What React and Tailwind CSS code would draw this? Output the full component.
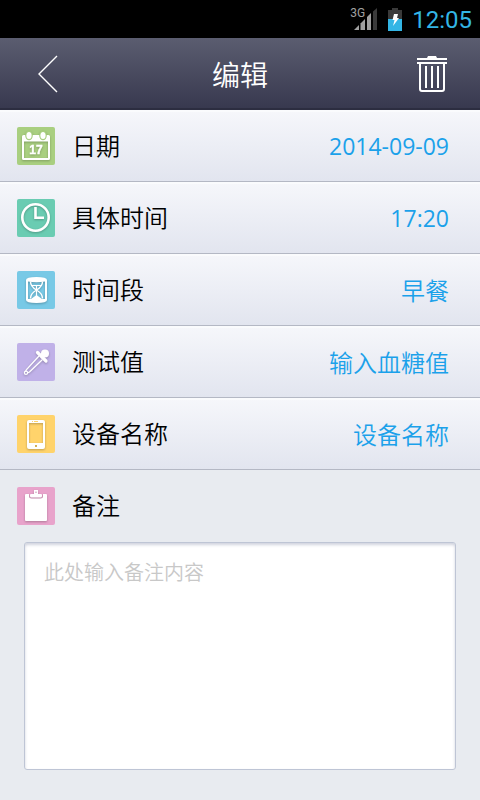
import React, { useState } from 'react';

const SignalIcon = () => (
  <svg width="23" height="22" viewBox="0 0 23 22" aria-hidden="true">
    <path d="M0 22 5 17V22Z" fill="#a0a0a0" />
    <path d="M6.500 22V15.500L11 11V22Z" fill="#a0a0a0" />
    <path d="M13 22V9L17 5V22Z" fill="#a0a0a0" />
    <path d="M19 22V3.500L23 0V22Z" fill="#3a3a3a" />
  </svg>
);

const BatteryIcon = () => (
  <svg width="14" height="23" viewBox="0 0 14 23" aria-hidden="true">
    <path d="M4 0H10V2H14V11H0V2H4Z" fill="#3a3a3a" />
    <path d="M0 11H14V23H0Z" fill="#33b5e5" />
    <path d="M6 6H10L9 10H11L5 18L6.500 12H4.500Z" fill="#fff" />
  </svg>
);

const BackIcon = () => (
  <svg width="20" height="38" viewBox="0 0 20 38" fill="none" stroke="#fff" strokeWidth="1.400" aria-hidden="true">
    <path d="M19 1 1 19 19 37" />
  </svg>
);

const TrashIcon = () => (
  <svg width="30" height="36" viewBox="0 0 30 36" fill="none" stroke="#fff" strokeWidth="2" aria-hidden="true">
    <path d="M11 0H19L20 2H10Z" fill="#fff" stroke="none" />
    <path d="M0 3H30M0 7H30" />
    <path d="M3 7V33Q3 35 5 35H25Q27 35 27 33V7" />
    <path d="M9 10V32M15 10V32M21 10V32" />
  </svg>
);

const CalendarIcon = () => (
  <>
    <path d="M6.500 8H31.500Q33 8 33 9.500V31.500Q33 33 31.500 33H6.500Q5 33 5 31.500V9.500Q5 8 6.500 8ZM7 14.500V31H31V14.500Z" fill="#fff" fillRule="evenodd" />
    <g stroke="none">
      <ellipse cx="12" cy="8.500" rx="3.800" ry="4.800" fill="#a9cf80" />
      <ellipse cx="26" cy="8.500" rx="3.800" ry="4.800" fill="#a9cf80" />
      <ellipse cx="12" cy="8.500" rx="2.600" ry="3.500" fill="#fff" />
      <ellipse cx="26" cy="8.500" rx="2.600" ry="3.500" fill="#fff" />
    </g>
    <text x="19" y="27" textAnchor="middle" fill="#fff" stroke="#fff" strokeWidth="0.400" fontFamily="Liberation Sans, Arial, sans-serif" fontSize="12" fontWeight="700">
      17
    </text>
  </>
);

const ClockIcon = () => (
  <g fill="none" stroke="#fff">
    <circle cx="18.500" cy="18.500" r="13.200" strokeWidth="2.600" />
    <path d="M18.500 8V18.700H27" strokeWidth="2.600" />
  </g>
);

const HourglassIcon = () => (
  <>
    <path
      d="M9 9Q9 6 19.500 6Q30 6 30 9V29Q30 32 19.500 32Q9 32 9 29ZM11 10.500V28H28V10.500Q19.500 12 11 10.500Z"
      fill="#fff"
      fillRule="evenodd"
    />
    <g fill="none" stroke="#fff">
      <path d="M13.500 10.500Q13.500 15.500 19.500 19Q25.500 22.500 25.500 27.500M25.500 10.500Q25.500 15.500 19.500 19Q13.500 22.500 13.500 27.500" strokeWidth="1.400" />
      <path d="M15 14.500H24M19.500 15V27" strokeWidth="1.200" />
    </g>
    <path d="M14 28 19.500 24 25 28Z" fill="#fff" />
  </>
);

const DropperIcon = () => (
  <g fill="none" stroke="#fff" strokeLinecap="round">
    <path d="M21.500 13.500 9.500 26.500 8.500 28.500M25 17 12.500 29 10.500 30" strokeWidth="1.300" />
    <circle cx="9" cy="29.800" r="1.600" strokeWidth="1.200" />
    <path d="M20.500 9.500 29 18" strokeWidth="3.200" />
    <path d="M24 14 27.500 10.500" strokeWidth="5" strokeLinecap="butt" />
    <circle cx="28" cy="10.500" r="4" fill="#fff" stroke="none" />
  </g>
);

const PhoneIcon = () => (
  <>
    <path d="M12 5H26Q28 5 28 7V32Q28 34 26 34H12Q10 34 10 32V7Q10 5 12 5ZM12 8V28H26V8ZM18 30V32H20V30Z" fill="#fff" fillRule="evenodd" />
    <path d="M15 6.500H16M17 6.500H21" stroke="#ffd36b" strokeWidth="1" />
  </>
);

const ClipboardIcon = () => (
  <>
    <path d="M9 7H12V9Q12 11.500 14.500 11.500H23.500Q26 11.500 26 9V7H29Q30 7 30 8V33Q30 34 29 34H9Q8 34 8 33V8Q8 7 9 7Z" fill="#fff" />
    <path d="M17 3H21V7H24Q25 7 25 8V9Q25 10.500 23.500 10.500H14.500Q13 10.500 13 9V8Q13 7 14 7H17ZM18.500 4.500V6H19.500V4.500Z" fill="#fff" fillRule="evenodd" />
  </>
);

const Tile = ({ className, children }) => (
  <svg
    width="38"
    height="38"
    viewBox="0 0 38 38"
    aria-hidden="true"
    className={`shrink-0 rounded-[2px] [&>g]:drop-shadow-[0_1px_1px_rgba(0,0,0,0.25)] ${className}`}
  >
    <g>{children}</g>
  </svg>
);

const FIELDS = [
  { id: 'date', label: '日期', value: '2014-09-09', font: 'text-[23px] font-normal', tile: 'bg-[#a9cf80]', Icon: CalendarIcon },
  { id: 'time', label: '具体时间', value: '17:20', font: 'text-[23px] font-normal', tile: 'bg-[#6accb2]', Icon: ClockIcon },
  { id: 'period', label: '时间段', value: '早餐', font: 'text-2xl', tile: 'bg-[#78c9e6]', Icon: HourglassIcon },
  { id: 'glucose', label: '测试值', placeholder: '输入血糖值', tile: 'bg-[#c0b1e8]', Icon: DropperIcon },
  { id: 'device', label: '设备名称', placeholder: '设备名称', tile: 'bg-[#ffd36b]', Icon: PhoneIcon },
];

const FieldRow = ({ field }) => {
  const { id, label, value, placeholder, font, tile, Icon } = field;
  const [text, setText] = useState('');

  return (
    <div className="flex h-[72px] items-center gap-[17px] border-b border-[#b4b8c4] bg-linear-to-b from-[#f6f7fb] to-[#e2e5ef] pl-[17px] pr-[31px] shadow-[inset_0_2px_0_#fafbfd]">
      <Tile className={tile}>
        <Icon />
      </Tile>
      <label htmlFor={id} className="shrink-0 text-black">
        {label}
      </label>
      {placeholder ? (
        <input
          id={id}
          type="text"
          value={text}
          onChange={(e) => setText(e.target.value)}
          placeholder={placeholder}
          className="min-w-0 flex-1 bg-transparent pt-[2px] text-right text-[#1ba1ea] outline-none placeholder:text-[#1ba1ea]"
        />
      ) : (
        <button id={id} type="button" className={`flex-1 pt-[2px] text-right text-[#1ba1ea] ${font}`}>
          {value}
        </button>
      )}
    </div>
  );
};

const App = () => {
  const [note, setNote] = useState('');

  return (
    <div className="flex min-h-screen flex-col bg-[#e8ebf0] font-['Open_Sans','Noto_Sans_CJK_SC',sans-serif] text-2xl font-[350]">
      <div className="flex h-[38px] items-center justify-end bg-black pr-2 font-[Roboto,sans-serif] font-normal text-[#33b5e5]">
        <span className="mb-3 text-xs leading-4 text-[#a0a0a0]">3G</span>
        <div className="-ml-[11px] mr-[11px]">
          <SignalIcon />
        </div>
        <BatteryIcon />
        <span className="ml-[10px] pt-px">12:05</span>
      </div>

      <header className="flex h-[72px] items-center justify-between border-b-2 border-[#2c2d40] bg-linear-to-b from-[#5b5d70] to-[#38394f] px-[33px] pt-[2px]">
        <button type="button" aria-label="返回" className="flex w-[30px] justify-center">
          <BackIcon />
        </button>
        <h1 className="pt-[2px] text-[28px] leading-9 font-[350] text-white">编辑</h1>
        <button type="button" aria-label="删除" className="w-[30px]">
          <TrashIcon />
        </button>
      </header>

      <main className="flex flex-1 flex-col">
        {FIELDS.map((field) => (
          <FieldRow key={field.id} field={field} />
        ))}

        <div className="flex h-[72px] items-center gap-[17px] px-[17px]">
          <Tile className="bg-[#e8a3cb]">
            <ClipboardIcon />
          </Tile>
          <label htmlFor="note" className="text-black">
            备注
          </label>
        </div>
        <textarea
          id="note"
          value={note}
          onChange={(e) => setNote(e.target.value)}
          placeholder="此处输入备注内容"
          className="mx-6 mb-[30px] flex-1 resize-none rounded-[3px] border border-[#bec5d5] bg-white px-[19px] py-4 text-xl leading-7 text-black shadow-[inset_0_2px_3px_rgba(120,130,160,0.35)] outline-none placeholder:text-[#c8c8c8]"
        />
      </main>
    </div>
  );
};

export default App;
